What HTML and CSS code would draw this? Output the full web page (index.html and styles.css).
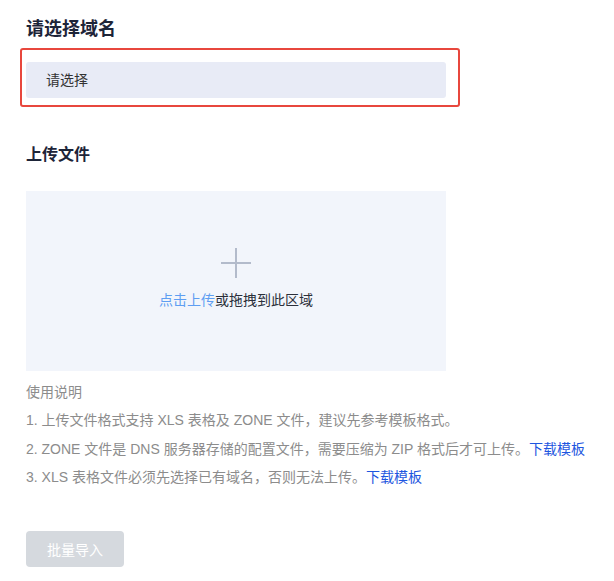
FILE: index.html
```html
<!DOCTYPE html>
<html lang="zh-CN">
<head>
  <meta charset="UTF-8" />
  <meta name="viewport" content="width=device-width, initial-scale=1" />
  <title>批量导入</title>
  <link rel="stylesheet" href="styles.css">
</head>
<body>
  <div class="pagina">
    <h2 class="titulo">请选择域名</h2>

    <div class="destaque">
      <div class="seletor">请选择</div>
    </div>

    <h2 class="titulo titulo-menor">上传文件</h2>

    <div class="upload">
      <svg class="mais" width="30" height="30" viewBox="0 0 30 30">
        <path d="M15 0 V30 M0 15 H30" stroke="#b3bbcb" stroke-width="2" fill="none" />
      </svg>
      <p class="upload-texto"><span class="azul-claro">点击上传</span>或拖拽到此区域</p>
    </div>

    <div class="instrucoes">
      <p>使用说明</p>
      <p>1. 上传文件格式支持 XLS 表格及 ZONE 文件，建议先参考模板格式。</p>
      <p>2. ZONE 文件是 DNS 服务器存储的配置文件，需要压缩为 ZIP 格式后才可上传。<a href="#">下载模板</a></p>
      <p>3. XLS 表格文件必须先选择已有域名，否则无法上传。<a href="#">下载模板</a></p>
    </div>

    <button class="botao-importar" disabled>批量导入</button>
  </div>
</body>
</html>
```

FILE: styles.css
```css
html, body {
  margin: 0;
  padding: 0;
  background: #fff;
  font-family: 'Liberation Sans', 'Noto Sans CJK SC', sans-serif;
  color: #333;
}

.pagina {
  padding: 17px 26px 0;
}

.titulo {
  margin: 0;
  font-size: 18px;
  line-height: 24px;
  font-weight: bold;
  color: #1d2438;
}

.titulo-menor {
  font-size: 16px;
  line-height: 22px;
  margin-top: 37px;
}

/* moldura vermelha em volta do seletor */
.destaque {
  box-sizing: border-box;
  width: 440px;
  margin: 7px 0 0 -6px;
  padding: 12px 12px 7px 4px;
  border: 2px solid #e8473d;
  border-radius: 3px;
}

.seletor {
  height: 36px;
  line-height: 36px;
  padding-left: 20px;
  background: #e8ebf6;
  border-radius: 3px;
  font-size: 14px;
  color: #333;
}

.upload {
  box-sizing: border-box;
  width: 420px;
  height: 180px;
  margin-top: 25px;
  padding-bottom: 4px;
  background: #f2f5fb;
  display: flex;
  flex-direction: column;
  align-items: center;
  justify-content: center;
  gap: 12px;
}

.mais {
  display: block;
}

.upload-texto {
  margin: 0;
  font-size: 14px;
  line-height: 20px;
  color: #2b2f3a;
}

.azul-claro {
  color: #5e9ef2;
}

.instrucoes {
  margin-top: 7px;
  font-size: 14px;
  line-height: 28.3px;
  color: #8c8c8c;
  white-space: nowrap;
}

.instrucoes p {
  margin: 0;
}

.instrucoes a {
  color: #1e56e0;
  text-decoration: none;
}

.botao-importar {
  display: block;
  margin-top: 40px;
  width: 98px;
  height: 36px;
  border: none;
  border-radius: 4px;
  background: #d5d9de;
  color: #fff;
  font-family: inherit;
  font-size: 14px;
  padding: 0;
}
```
